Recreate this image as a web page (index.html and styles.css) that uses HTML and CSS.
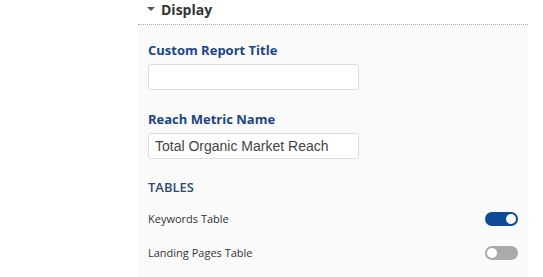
FILE: index.html
```html
<!DOCTYPE html>
<html lang="en">
<head>
  <meta charset="UTF-8" />
  <title>Display settings</title>
  <link rel="stylesheet" href="styles.css">
</head>
<body>
  <div class="panel">
    <div class="panel-head">
      <span class="caret"></span>
      <span class="panel-title">Display</span>
    </div>
    <div class="panel-body">
      <label class="field-label">Custom Report Title</label>
      <input class="text-input" type="text" value="">

      <label class="field-label second">Reach Metric Name</label>
      <input class="text-input" type="text" value="Total Organic Market Reach">

      <div class="section-title">TABLES</div>
      <div class="toggle-list">
        <div class="toggle-row">
          <span>Keywords Table</span>
          <span class="toggle on"></span>
        </div>
        <div class="toggle-row">
          <span>Landing Pages Table</span>
          <span class="toggle"></span>
        </div>
      </div>
    </div>
  </div>
</body>
</html>
```

FILE: styles.css
```css
body {
  margin: 0;
  background: #fff;
  font-family: "Open Sans", Arial, sans-serif;
}

.panel {
  margin-left: 138px;
  width: 390px;
}

.panel-head {
  height: 25px;
  display: flex;
  align-items: center;
  border-bottom: 1px dotted #aaa;
  box-sizing: border-box;
  padding-left: 9px;
  padding-bottom: 6px;
}

.caret {
  width: 0;
  height: 0;
  border-left: 4px solid transparent;
  border-right: 4px solid transparent;
  border-top: 4px solid #555;
  margin-right: 6px;
}

.panel-title {
  font-size: 14px;
  font-weight: 700;
  color: #333;
}

.panel-body {
  background: #fafafa;
  padding: 16px 10px 10px 10px;
  height: 252px;
  box-sizing: border-box;
}

.field-label {
  display: block;
  font-size: 13px;
  font-weight: 700;
  color: #1a4586;
  line-height: 18px;
  margin-bottom: 5px;
}

.field-label.second {
  margin-top: 20px;
}

.text-input {
  display: block;
  width: 211px;
  height: 26px;
  box-sizing: border-box;
  border: 1px solid #ddd;
  border-radius: 3px;
  background: #fff;
  padding: 0 6px;
  font-family: Arial, "Liberation Sans", sans-serif;
  font-size: 14px;
  color: #444;
}

.section-title {
  margin-top: 20px;
  font-size: 13px;
  font-weight: 600;
  color: #2d4a6e;
  line-height: 16px;
}

.toggle-list {
  margin-top: 6px;
}

.toggle-row {
  display: flex;
  justify-content: space-between;
  align-items: center;
  height: 34px;
  font-size: 11px;
  color: #333;
}

.toggle {
  position: relative;
  width: 33px;
  height: 14px;
  border-radius: 7px;
  background: #aaa;
  margin-top: 2px;
}

.toggle::after {
  content: "";
  position: absolute;
  top: 2px;
  left: 2px;
  width: 10px;
  height: 10px;
  border-radius: 50%;
  background: #fff;
}

.toggle.on {
  background: #0f4a96;
}

.toggle.on::after {
  left: 21px;
}
```
